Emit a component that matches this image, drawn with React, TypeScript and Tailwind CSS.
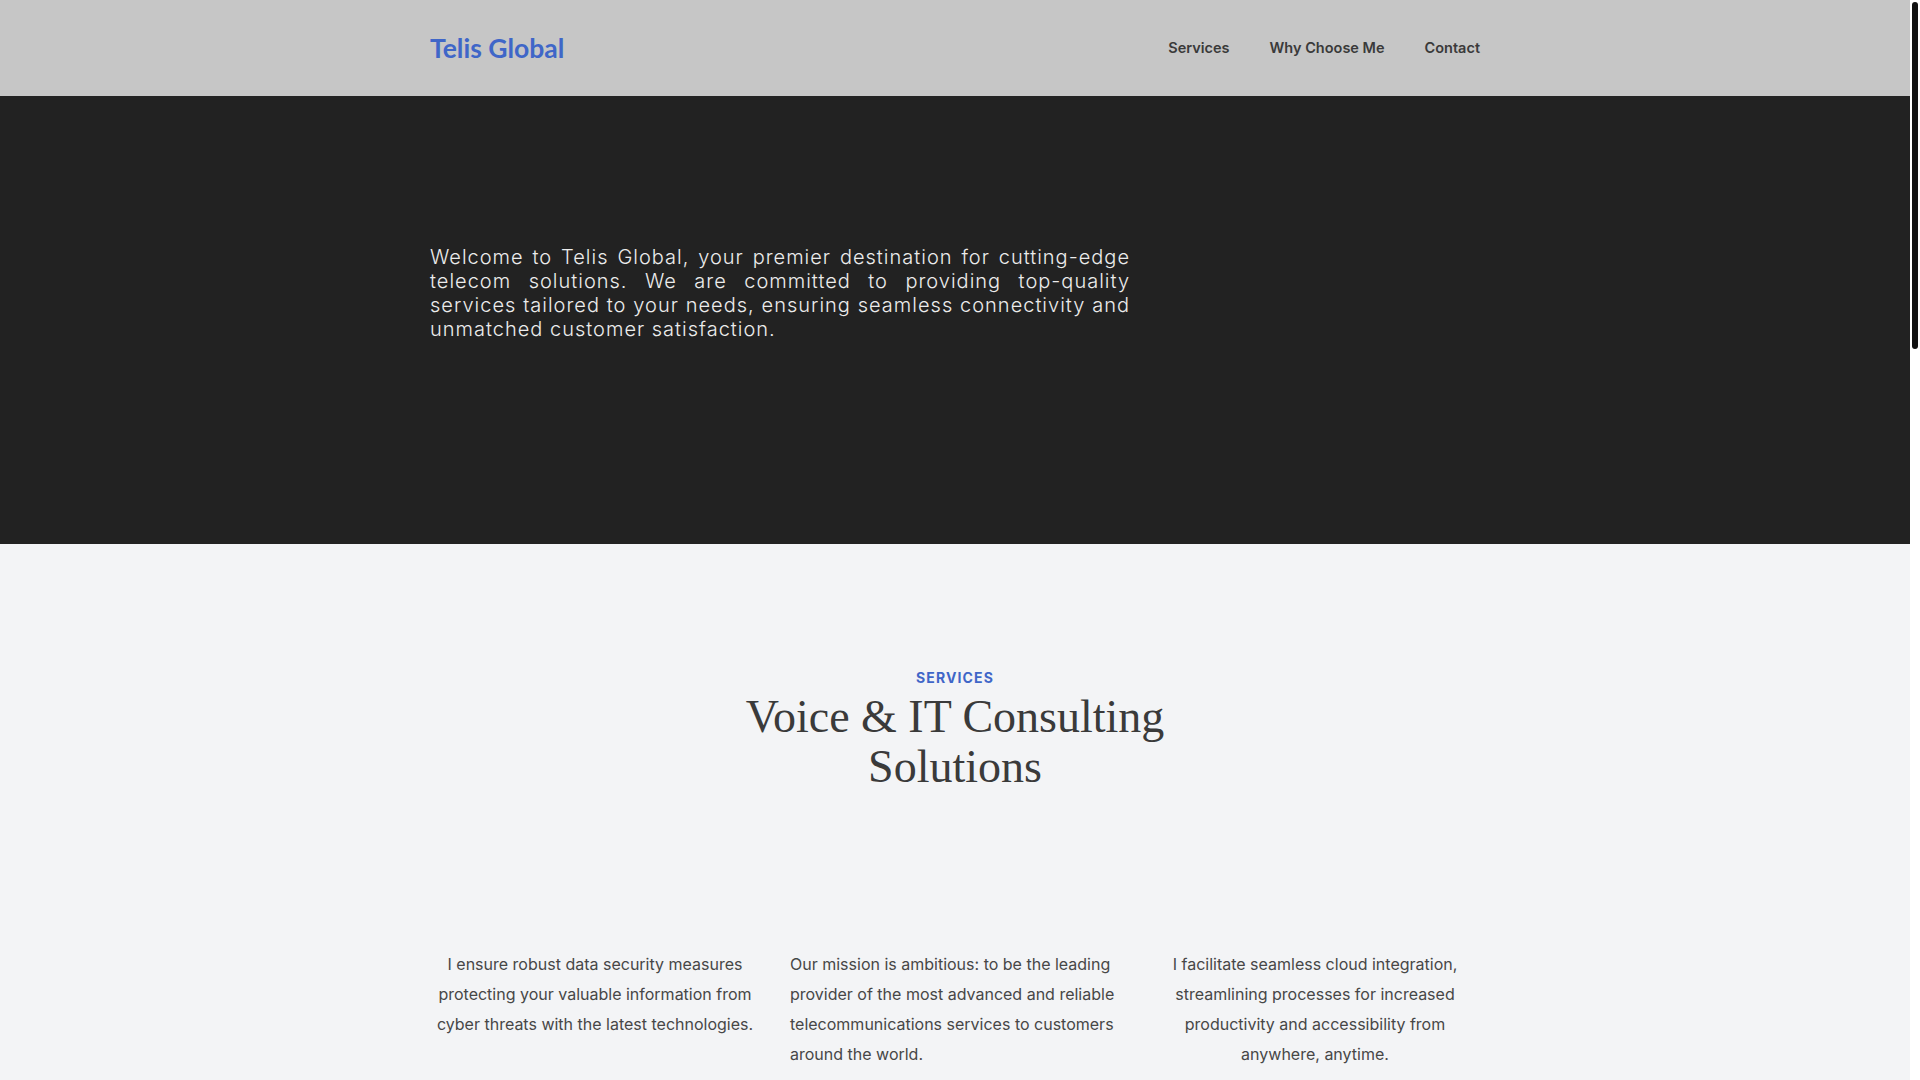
import React from 'react';

const navLinks = ['Services', 'Why Choose Me', 'Contact'];

const services = [
  {
    text: 'I ensure robust data security measures protecting your valuable information from cyber threats with the latest technologies.',
    align: 'text-center',
  },
  {
    text: 'Our mission is ambitious: to be the leading provider of the most advanced and reliable telecommunications services to customers around the world.',
    align: 'text-left',
  },
  {
    text: 'I facilitate seamless cloud integration, streamlining processes for increased productivity and accessibility from anywhere, anytime.',
    align: 'text-center',
  },
];

export default function App() {
  return (
    <div className="min-h-screen bg-white font-['Inter',sans-serif]">
      <div className="mr-[10px] bg-[#f3f4f6]">
        {/* Header */}
        <header className="h-[96px] bg-[#c6c6c6]">
          <div className="w-[1050px] mx-auto h-full flex items-center justify-between">
            <a href="#" className="font-['Lato',sans-serif] font-bold text-[26.5px] leading-none text-[#3f66c8]">
              Telis Global
            </a>
            <nav className="flex items-center gap-[40px]">
              {navLinks.map((link) => (
                <a key={link} href="#" className="text-[14.5px] font-semibold text-[#3a3a3a]">
                  {link}
                </a>
              ))}
            </nav>
          </div>
        </header>

        {/* Hero */}
        <section className="h-[448px] bg-[#222222]">
          <div className="w-[1050px] mx-auto grid grid-cols-3 pt-[149px]">
            <p className="col-span-2 text-[20px] leading-[24px] font-light tracking-[0.05em] text-[#ececec] text-justify">
              Welcome to Telis Global, your premier destination for cutting-edge telecom solutions. We are
              committed to providing top-quality services tailored to your needs, ensuring seamless
              connectivity and unmatched customer satisfaction.
            </p>
          </div>
        </section>

        {/* Services */}
        <section className="pt-[124px] pb-[110px]">
          <div className="w-[1050px] mx-auto">
            <div className="text-center">
              <p className="text-[14px] leading-5 font-bold tracking-[0.08em] text-[#3f66c8]">SERVICES</p>
              <h2 className="mt-[4px] max-w-[500px] mx-auto font-['Liberation_Serif',serif] text-[46px] leading-[50px] text-[#3a3a3a]">
                Voice &amp; IT Consulting Solutions
              </h2>
            </div>

            <div className="mt-[157px] grid grid-cols-3 gap-[30px]">
              {services.map((s, i) => (
                <p key={i} className={`text-[16px] leading-[30px] text-[#474747] ${s.align}`}>
                  {s.text}
                </p>
              ))}
            </div>
          </div>
        </section>
      </div>

      {/* scrollbar thumb */}
      <div className="fixed top-0 right-0 w-[10px] h-screen bg-white">
        <div className="mt-[2px] ml-[2px] w-[6px] h-[347px] rounded-full bg-[#111111]" />
      </div>
    </div>
  );
}
